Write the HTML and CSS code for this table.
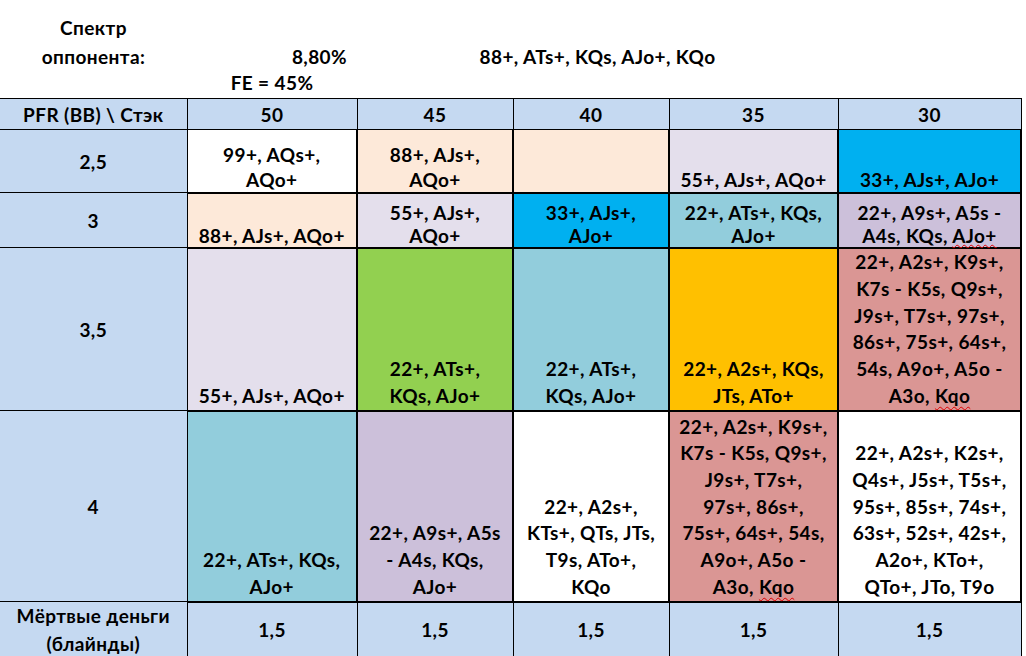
FILE: index.html
```html
<!DOCTYPE html>
<html lang="ru">
<head>
<meta charset="utf-8">
<title>Спектр оппонента</title>
<link rel="stylesheet" href="styles.css">
</head>
<body>
<table class="sheet">
  <colgroup>
    <col class="c-label">
    <col class="c-50">
    <col class="c-45">
    <col class="c-40">
    <col class="c-35">
    <col class="c-30">
  </colgroup>
  <tbody>
    <tr class="top-a">
      <td class="plain center">Спектр<br>оппонента:</td>
      <td class="plain right">8,80%</td>
      <td class="plain center" colspan="3">88+, ATs+, KQs, AJo+, KQo</td>
      <td class="plain"></td>
    </tr>
    <tr class="top-b">
      <td class="plain"></td>
      <td class="plain center">FE = 45%</td>
      <td class="plain" colspan="4"></td>
    </tr>
    <tr class="head">
      <td class="lbl first">PFR (BB) \ Стэк</td>
      <td class="lbl">50</td>
      <td class="lbl">45</td>
      <td class="lbl">40</td>
      <td class="lbl">35</td>
      <td class="lbl">30</td>
    </tr>
    <tr class="r1">
      <td class="lbl first">2,5</td>
      <td class="d white">99+, AQs+,<br>AQo+</td>
      <td class="d peach">88+, AJs+,<br>AQo+</td>
      <td class="d peach"></td>
      <td class="d lav">55+, AJs+, AQo+</td>
      <td class="d cyan">33+, AJs+, AJo+</td>
    </tr>
    <tr class="r2">
      <td class="lbl first">3</td>
      <td class="d peach">88+, AJs+, AQo+</td>
      <td class="d lav">55+, AJs+,<br>AQo+</td>
      <td class="d cyan">33+, AJs+,<br>AJo+</td>
      <td class="d teal">22+, ATs+, KQs,<br>AJo+</td>
      <td class="d purple">22+, A9s+, A5s -<br>A4s, KQs, <span class="spell tight">AJo+</span></td>
    </tr>
    <tr class="r3">
      <td class="lbl first">3,5</td>
      <td class="d lav">55+, AJs+, AQo+</td>
      <td class="d green">22+, ATs+,<br>KQs, AJo+</td>
      <td class="d teal">22+, ATs+,<br>KQs, AJo+</td>
      <td class="d amber">22+, A2s+, KQs,<br>JTs, ATo+</td>
      <td class="d rose">22+, A2s+, K9s+,<br>K7s - K5s, Q9s+,<br>J9s+, T7s+, 97s+,<br>86s+, 75s+, 64s+,<br>54s, A9o+, A5o -<br>A3o, <span class="spell">Kqo</span></td>
    </tr>
    <tr class="r4">
      <td class="lbl first">4</td>
      <td class="d teal">22+, ATs+, KQs,<br>AJo+</td>
      <td class="d purple">22+, A9s+, A5s<br>- A4s, KQs,<br>AJo+</td>
      <td class="d white">22+, A2s+,<br>KTs+, QTs, JTs,<br>T9s, ATo+,<br>KQo</td>
      <td class="d rose">22+, A2s+, K9s+,<br>K7s - K5s, Q9s+,<br>J9s+, T7s+,<br>97s+, 86s+,<br>75s+, 64s+, 54s,<br>A9o+, A5o -<br>A3o, <span class="spell">Kqo</span></td>
      <td class="d white">22+, A2s+, K2s+,<br>Q4s+, J5s+, T5s+,<br>95s+, 85s+, 74s+,<br>63s+, 52s+, 42s+,<br>A2o+, KTo+,<br>QTo+, JTo, T9o</td>
    </tr>
    <tr class="r5">
      <td class="lbl first">Мёртвые деньги<br>(блайнды)</td>
      <td class="lbl">1,5</td>
      <td class="lbl">1,5</td>
      <td class="lbl">1,5</td>
      <td class="lbl">1,5</td>
      <td class="lbl">1,5</td>
    </tr>
  </tbody>
</table>
</body>
</html>
```
FILE: styles.css
```css
html, body {
  margin: 0;
  padding: 0;
  background: #ffffff;
}

body {
  font-family: Lato, "Open Sans", "DejaVu Sans", sans-serif;
  font-weight: 700;
  font-size: 19px;
  letter-spacing: 0.4px;
  color: #000000;
  overflow: hidden;
}

.sheet {
  border-collapse: collapse;
  table-layout: fixed;
  width: 1021px;
}

.c-label { width: 187px; }
.c-50 { width: 170px; }
.c-45 { width: 156px; }
.c-40 { width: 156px; }
.c-35 { width: 169px; }
.c-30 { width: 183px; }

td {
  padding: 0 1px;
  text-align: center;
  white-space: nowrap;
}

.plain {
  border: none;
  vertical-align: bottom;
}

.center { text-align: center; }
.right { text-align: right; padding-right: 10px; }

.top-a { height: 71px; }
.top-a td { line-height: 29px; }
.top-b { height: 27px; }
.top-b td { line-height: 24px; padding-bottom: 3px; }

.lbl {
  background: #c5d9f1;
  border: 1px solid #000000;
  vertical-align: middle;
  line-height: 27px;
}

.first { border-left: none; }

.d {
  border: 1px solid #000000;
  border-right-width: 2px;
  border-bottom-width: 2px;
  vertical-align: bottom;
  line-height: 26.7px;
}

.head { height: 31px; }
.r1 { height: 63px; }
.r1 .d { line-height: 25px; }
.r2 { height: 55px; }
.r2 .d { line-height: 23px; }
.r3 { height: 163px; }
.r4 { height: 191px; }
.r5 { height: 57px; }
.r5 .lbl { line-height: 28px; }

.white { background: #ffffff; }
.peach { background: #fde9d9; }
.lav { background: #e4dfec; }
.cyan { background: #00b0f0; }
.teal { background: #92cddc; }
.purple { background: #ccc0da; }
.green { background: #92d050; }
.amber { background: #ffc000; }
.rose { background: #da9694; }

.spell {
  text-decoration: underline wavy #e00000;
  text-decoration-thickness: 1px;
  text-underline-offset: 3px;
}

.spell.tight {
  text-underline-offset: 1px;
}
```
